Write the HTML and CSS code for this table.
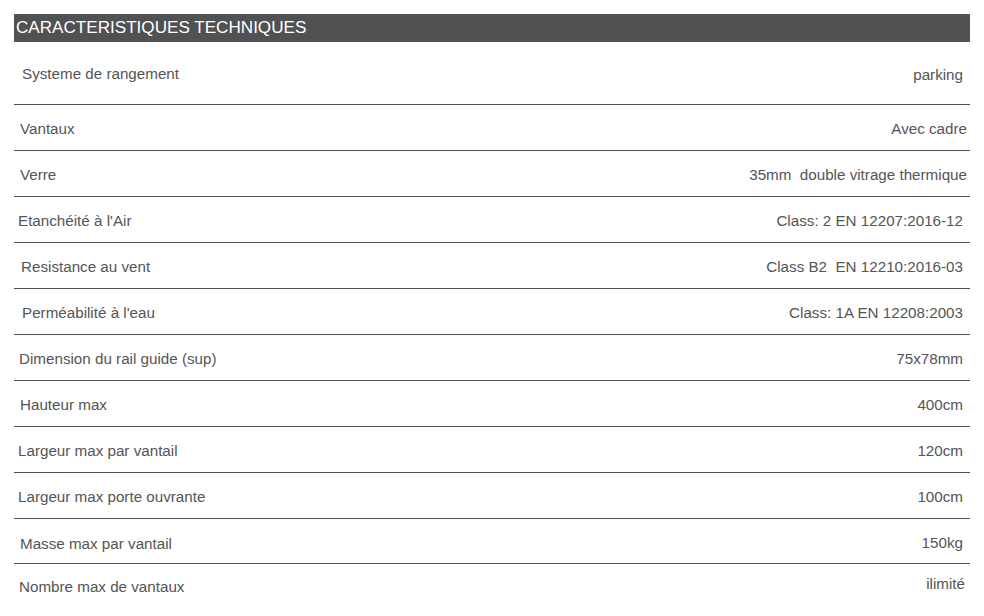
FILE: index.html
```html
<!DOCTYPE html>
<html lang="fr">
<head>
<meta charset="utf-8">
<title>Caracteristiques techniques</title>
<link rel="stylesheet" href="styles.css">
</head>
<body>
<section class="specs">
  <h2 class="specs-title">CARACTERISTIQUES TECHNIQUES</h2>
  <div class="spec-row spec-row--first">
    <span class="spec-label ind-22">Systeme de rangement</span>
    <span class="spec-value">parking</span>
  </div>
  <div class="spec-row">
    <span class="spec-label">Vantaux</span>
    <span class="spec-value end-3">Avec cadre</span>
  </div>
  <div class="spec-row">
    <span class="spec-label">Verre</span>
    <span class="spec-value end-3">35mm&nbsp; double vitrage thermique</span>
  </div>
  <div class="spec-row">
    <span class="spec-label ind-18">Etanchéité à l'Air</span>
    <span class="spec-value">Class: 2 EN 12207:2016-12</span>
  </div>
  <div class="spec-row">
    <span class="spec-label ind-21">Resistance au vent</span>
    <span class="spec-value">Class B2&nbsp; EN 12210:2016-03</span>
  </div>
  <div class="spec-row">
    <span class="spec-label ind-22">Perméabilité à l'eau</span>
    <span class="spec-value">Class: 1A EN 12208:2003</span>
  </div>
  <div class="spec-row">
    <span class="spec-label ind-19">Dimension du rail guide (sup)</span>
    <span class="spec-value">75x78mm</span>
  </div>
  <div class="spec-row">
    <span class="spec-label">Hauteur max</span>
    <span class="spec-value">400cm</span>
  </div>
  <div class="spec-row">
    <span class="spec-label ind-18">Largeur max par vantail</span>
    <span class="spec-value">120cm</span>
  </div>
  <div class="spec-row">
    <span class="spec-label ind-18">Largeur max porte ouvrante</span>
    <span class="spec-value">100cm</span>
  </div>
  <div class="spec-row spec-row--low">
    <span class="spec-label">Masse max par vantail</span>
    <span class="spec-value">150kg</span>
  </div>
  <div class="spec-row spec-row--last">
    <span class="spec-label ind-19">Nombre max de vantaux</span>
    <span class="spec-value end-5 raise">ilimité</span>
  </div>
</section>
</body>
</html>
```

FILE: styles.css
```css
html, body {
  margin: 0;
  padding: 0;
  background: #ffffff;
}

body {
  font-family: "Liberation Sans", Arial, sans-serif;
  color: #555555;
}

.specs {
  margin: 14px;
  width: 956px;
}

.specs-title {
  margin: 0;
  height: 28px;
  background: #505152;
  color: #ffffff;
  font-size: 17.1px;
  font-weight: normal;
  line-height: 28px;
  padding-left: 2px;
}

.spec-row {
  display: flex;
  justify-content: space-between;
  align-items: center;
  box-sizing: border-box;
  height: 46px;
  padding-top: 2px;
  border-bottom: 1px solid #4f4f4f;
  font-size: 15.2px;
  line-height: 17px;
  padding-left: 6px;
  padding-right: 7px;
}

.spec-row--first {
  height: 63px;
  align-items: flex-start;
  padding-top: 23px;
}

.spec-row--low {
  height: 45px;
}

.spec-row--low .spec-label {
  position: relative;
  top: 1px;
}

.spec-row--last {
  border-bottom: none;
  align-items: flex-start;
  padding-top: 14px;
}

.spec-label {
  white-space: nowrap;
}

.spec-value {
  white-space: nowrap;
}

.spec-row--first .spec-value {
  margin-top: 1px;
}

.ind-18 { margin-left: -2px; }
.ind-19 { margin-left: -1px; }
.ind-21 { margin-left: 1px; }
.ind-22 { margin-left: 2px; }

.end-3 { margin-right: -4px; }
.end-5 { margin-right: -2px; }

.raise { margin-top: -3px; }
```
